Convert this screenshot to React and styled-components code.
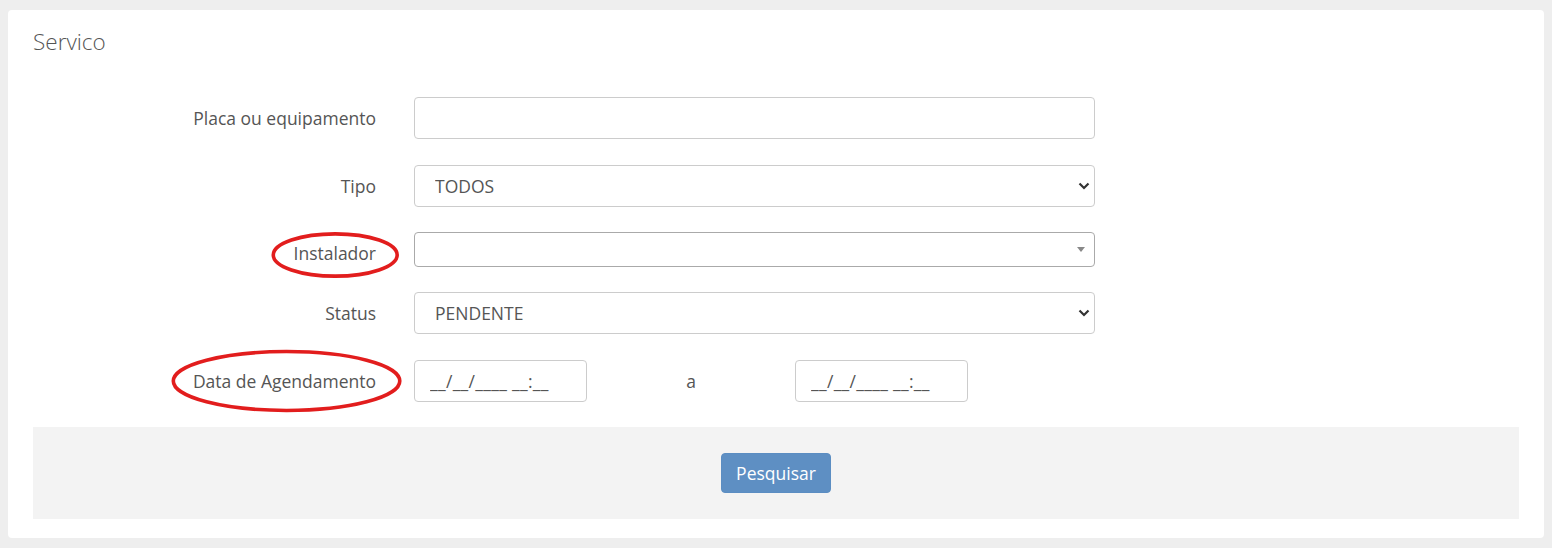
import React from "react";
import styled, { createGlobalStyle } from "styled-components";

const Global = createGlobalStyle`
  html, body { margin: 0; padding: 0; background: #eeeeee; }
  body { font-family: "Open Sans", "Liberation Sans", sans-serif; color: #555; }
  * { box-sizing: border-box; }
`;

const Page = styled.div`
  padding: 10px 8px;
`;

const Card = styled.section`
  background: #fff;
  border-radius: 4px;
  height: 528px;
  padding: 0 25px 19px;
  display: flex;
  flex-direction: column;
`;

const Title = styled.h2`
  margin: 0;
  padding-top: 17px;
  height: 87px;
  flex-shrink: 0;
  font-size: 22.5px;
  font-weight: 300;
  line-height: 30px;
  color: #555;
`;

const Form = styled.form`
  display: flex;
  flex-direction: column;
  flex: 1;
`;

const Row = styled.div`
  display: grid;
  grid-template-columns: 343px 681px;
  column-gap: 38px;
  align-items: start;
  margin-bottom: ${(p) => p.$gap}px;
`;

const Label = styled.label`
  padding-top: 9px;
  display: flex;
  justify-content: flex-end;
  font-size: 17.5px;
  color: #555;
  line-height: 24px;
`;

const Marked = styled.span`
  position: relative;
  display: inline-block;
`;

const Ellipse = styled.svg`
  position: absolute;
  overflow: visible;
  pointer-events: none;
  left: ${(p) => p.$l}px;
  top: ${(p) => p.$t}px;
  width: calc(100% - ${(p) => p.$l + p.$r}px);
  height: calc(100% - ${(p) => p.$t + p.$b}px);
`;

const TextInput = styled.input`
  height: 42px;
  width: ${(p) => (p.$w ? p.$w + "px" : "100%")};
  border: 1px solid #ccc;
  border-radius: 4px;
  padding: 0 15px;
  font-family: inherit;
  font-size: 17.5px;
  color: #555;
  background: #fff;
  outline: none;
  &::placeholder { color: #555; opacity: 1; letter-spacing: 0.3px; }
`;

const SelectWrap = styled.div`
  position: relative;
  width: 100%;
`;

const Select = styled.select`
  appearance: none;
  -webkit-appearance: none;
  width: 100%;
  height: 42px;
  border: 1px solid #ccc;
  border-radius: 4px;
  padding: 0 30px 0 20px;
  font-family: inherit;
  font-size: 17.5px;
  color: #555;
  background: #fff;
  outline: none;
`;

const Chevron = styled.svg`
  position: absolute;
  right: 5px;
  top: 50%;
  margin-top: -4px;
  width: 12px;
  height: 8px;
  pointer-events: none;
`;

const Combo = styled.div`
  position: relative;
  height: 35px;
  border: 1px solid #aaa;
  border-radius: 4px;
  background: #fff;
`;

const Caret = styled.span`
  position: absolute;
  right: 9px;
  top: 14px;
  width: 0;
  height: 0;
  border-style: solid;
  border-width: 5px 4px 0 4px;
  border-color: #888 transparent transparent transparent;
`;

const DateGroup = styled.div`
  display: flex;
  align-items: center;
`;

const Sep = styled.span`
  width: 208px;
  text-align: center;
  font-size: 17.5px;
  color: #555;
`;

const Footer = styled.div`
  margin-top: auto;
  height: 92px;
  flex-shrink: 0;
  background: #f3f3f3;
  display: flex;
  align-items: center;
  justify-content: center;
`;

const Button = styled.button`
  width: 110px;
  height: 40px;
  border: 1px solid #5b8dc2;
  border-radius: 4px;
  background: #5e8fc3;
  color: #fff;
  font-family: inherit;
  font-size: 17.5px;
  padding: 0;
  cursor: pointer;
`;

const RedEllipse = (props) => (
  <Ellipse {...props} viewBox="0 0 100 100" preserveAspectRatio="none">
    <ellipse
      cx="50"
      cy="50"
      rx="49"
      ry="46"
      fill="none"
      stroke="#e21d1d"
      strokeWidth="3.6"
      vectorEffect="non-scaling-stroke"
    />
  </Ellipse>
);

const ChevronIcon = () => (
  <Chevron viewBox="0 0 12 8">
    <path d="M1.5 1.5 L6 6 L10.5 1.5" fill="none" stroke="#333" strokeWidth="2.2" />
  </Chevron>
);

export default function App() {
  return (
    <Page>
      <Global />
      <Card>
        <Title>Servico</Title>
        <Form onSubmit={(e) => e.preventDefault()}>
          <Row $gap={26}>
            <Label>Placa ou equipamento</Label>
            <TextInput type="text" />
          </Row>
          <Row $gap={25}>
            <Label>Tipo</Label>
            <SelectWrap>
              <Select defaultValue="TODOS">
                <option>TODOS</option>
              </Select>
              <ChevronIcon />
            </SelectWrap>
          </Row>
          <Row $gap={25}>
            <Label>
              <Marked>
                Instalador
                <RedEllipse $l={-22} $r={-22} $t={-9} $b={-13} />
              </Marked>
            </Label>
            <Combo>
              <Caret />
            </Combo>
          </Row>
          <Row $gap={26}>
            <Label>Status</Label>
            <SelectWrap>
              <Select defaultValue="PENDENTE">
                <option>PENDENTE</option>
              </Select>
              <ChevronIcon />
            </SelectWrap>
          </Row>
          <Row $gap={25}>
            <Label>
              <Marked>
                Data de Agendamento
                <RedEllipse $l={-22} $r={-26} $t={-20} $b={-20} />
              </Marked>
            </Label>
            <DateGroup>
              <TextInput type="text" $w={173} placeholder="__/__/____ __:__" />
              <Sep>a</Sep>
              <TextInput type="text" $w={173} placeholder="__/__/____ __:__" />
            </DateGroup>
          </Row>
          <Footer>
            <Button type="submit">Pesquisar</Button>
          </Footer>
        </Form>
      </Card>
    </Page>
  );
}
